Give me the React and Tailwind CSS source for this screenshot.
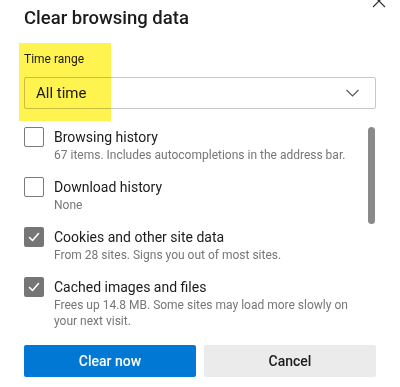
import React from 'react';

const items = [
  { label: 'Browsing history', detail: '67 items. Includes autocompletions in the address bar.', checked: false },
  { label: 'Download history', detail: 'None', checked: false },
  { label: 'Cookies and other site data', detail: 'From 28 sites. Signs you out of most sites.', checked: true },
  { label: 'Cached images and files', detail: 'Frees up 14.8 MB. Some sites may load more slowly on your next visit.', checked: true },
];

const Checkbox = ({ checked }) =>
  checked ? (
    <div className="w-5 h-5 shrink-0 rounded-[2px] bg-[#767676] flex items-center justify-center">
      <svg width="14" height="14" viewBox="0 0 14 14" fill="none">
        <path d="M2.5 7.5l3 3 6-7" stroke="#fff" strokeWidth="1.6" strokeLinecap="round" strokeLinejoin="round" />
      </svg>
    </div>
  ) : (
    <div className="w-5 h-5 shrink-0 rounded-[2px] border border-[#7a7a7a] bg-white" />
  );

const App = () => {
  return (
    <div className="relative w-[400px] h-[387px] bg-white overflow-hidden text-[#1b1b1b]" style={{ fontFamily: 'Roboto, "Liberation Sans", sans-serif' }}>
      {/* close button, mostly scrolled out of view */}
      <svg className="absolute left-[372px] top-[-6px]" width="14" height="14" viewBox="0 0 14 14" fill="none">
        <path d="M1 1l12 12M13 1L1 13" stroke="#333" strokeWidth="1.2" />
      </svg>

      <div className="px-6 pt-[4px]">
        <h1 className="text-[18.5px] leading-[28px] font-medium">Clear browsing data</h1>

        <div className="mt-[19px] text-[12px] leading-4">Time range</div>
        <div className="mt-[10px] h-8 border border-[#c8c8c8] rounded-[2px] flex items-center justify-between pl-[11px] pr-4">
          <span className="text-[15px]">All time</span>
          <svg width="13" height="8" viewBox="0 0 13 8" fill="none">
            <path d="M0.5 1l6 6 6-6" stroke="#555" strokeWidth="1.1" />
          </svg>
        </div>

        <div className="relative mt-[18px] h-[201px] overflow-hidden">
          <div className="flex flex-col gap-[14px]">
            {items.map((item) => (
              <div key={item.label} className="flex gap-[10px]">
                <Checkbox checked={item.checked} />
                <div className="w-[296px]">
                  <div className="text-[14px] leading-5">{item.label}</div>
                  <div className="text-[12px] leading-4 text-[#767676]">{item.detail}</div>
                </div>
              </div>
            ))}
          </div>
          <div className="absolute right-[1px] top-0 w-[7px] h-[97px] rounded-full bg-[#8a8a8a]" />
        </div>

        <div className="mt-[17px] grid grid-cols-2 gap-2">
          <button className="h-8 rounded-[2px] bg-[#0078d4] text-white text-[14px] font-medium">Clear now</button>
          <button className="h-8 rounded-[2px] bg-[#ebebeb] text-[#1b1b1b] text-[14px] font-medium">Cancel</button>
        </div>
      </div>

      {/* highlighter annotation */}
      <div className="absolute left-[19px] top-[43px] w-[92px] h-[78px] bg-[#fff350] mix-blend-multiply pointer-events-none" />
    </div>
  );
};

export default App;
